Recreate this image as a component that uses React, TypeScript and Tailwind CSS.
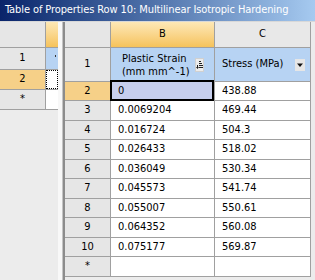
import React from 'react';

const font = { fontFamily: '"DejaVu Sans Condensed", "DejaVu Sans", sans-serif' };

const rows: { n: string; b: string; c: string; h: string }[] = [
  { n: '2', b: '0', c: '438.88', h: 'h-[19px]' },
  { n: '3', b: '0.0069204', c: '469.44', h: 'h-[20px]' },
  { n: '4', b: '0.016724', c: '504.3', h: 'h-[19px]' },
  { n: '5', b: '0.026433', c: '518.02', h: 'h-[20px]' },
  { n: '6', b: '0.036049', c: '530.34', h: 'h-[19px]' },
  { n: '7', b: '0.045573', c: '541.74', h: 'h-[20px]' },
  { n: '8', b: '0.055007', c: '550.61', h: 'h-[19px]' },
  { n: '9', b: '0.064352', c: '560.08', h: 'h-[20px]' },
  { n: '10', b: '0.075177', c: '569.87', h: 'h-[19px]' },
  { n: '*', b: '', c: '', h: 'h-[20px]' },
];

const SortIcon = () => (
  <svg width="9" height="14" viewBox="0 0 9 14" className="block">
    <rect x="0.5" y="0.5" width="8" height="13" fill="#ececec" stroke="#d0d0d0" />
    <path d="M4 3.5h2M4 5.5h3M4 7.5h4M4 9.5h4" stroke="#222" strokeWidth="1" />
    <path d="M1 9h3l-1.5 2z" fill="#222" />
    <rect x="2" y="7" width="1" height="2" fill="#222" />
  </svg>
);

const DropIcon = () => (
  <svg width="10" height="12" viewBox="0 0 10 12" className="block">
    <rect x="0" y="0" width="10" height="12" fill="#e6e6e6" />
    <path d="M2 4.5h6l-3 3.5z" fill="#111" />
  </svg>
);

export default function App() {
  return (
    <div className="w-[315px] h-[280px] bg-[#ececec] overflow-hidden flex flex-col text-black" style={font}>
      <div className="h-[21px] shrink-0 bg-gradient-to-r from-[#0a246a] to-[#a6caf0] text-white text-[11px] tracking-[-0.1px] pl-[5px] flex items-center">
        Table of Properties Row 10: Multilinear Isotropic Hardening
      </div>
      <div className="h-px shrink-0 bg-[#d8d8d8]" />
      <div className="flex flex-1 text-[11px]">
        {/* left pane */}
        <div className="w-[58px] flex flex-col">
          <div className="flex h-[26px] border-b border-[#a0a0a0]">
            <div className="w-[46px] bg-[#e6e6e6] border-r border-[#a0a0a0]" />
            <div className="w-[12px] bg-gradient-to-b from-[#fde8b6] to-[#f6c35a]" />
          </div>
          <div className="flex h-[22px] border-b border-[#a0a0a0]">
            <div className="w-[46px] bg-[#e6e6e6] border-r border-[#a0a0a0] flex items-center justify-center">1</div>
            <div className="w-[12px] bg-[#b7d3f3] relative">
              <div className="absolute left-[9px] top-[7px] w-px h-[2px] bg-[#333]" />
            </div>
          </div>
          <div className="flex h-[20px] border-b border-[#a0a0a0]">
            <div className="w-[46px] bg-[#f6d088] border-r border-[#a0a0a0] flex items-center justify-center">2</div>
            <div className="w-[12px] bg-white border border-dotted border-black" />
          </div>
          <div className="flex h-[20px] border-b border-[#a0a0a0]">
            <div className="w-[46px] bg-[#e6e6e6] border-r border-[#a0a0a0] flex items-center justify-center">*</div>
            <div className="w-[12px] bg-white" />
          </div>
        </div>
        <div className="w-[4px] bg-[#f8f8f8]" />
        <div className="w-[1px] bg-[#c4c4c4]" />
        <div className="w-[2px] bg-[#8c8c8c]" />
        {/* right table */}
        <div className="w-[246px] flex flex-col">
          <div className="flex h-[26px] border-b border-[#a0a0a0]">
            <div className="w-[46px] bg-[#e6e6e6] border-r border-[#a0a0a0]" />
            <div className="w-[104px] bg-gradient-to-b from-[#fde8b6] to-[#f6c35a] border-r border-[#a0a0a0] flex items-center justify-center">B</div>
            <div className="w-[96px] bg-[#e8e8e8] border-r border-[#a0a0a0] flex items-center justify-center">C</div>
          </div>
          <div className="flex h-[34px] border-b border-[#a0a0a0]">
            <div className="w-[46px] bg-[#e6e6e6] border-r border-[#a0a0a0] flex items-center justify-center">1</div>
            <div className="w-[104px] bg-[#b7d3f3] border-r border-[#a0a0a0] flex items-center pl-[11px] pr-[10px] justify-between">
              <div className="leading-[13px]">
                <div>Plastic Strain</div>
                <div>(mm mm^-1)</div>
              </div>
              <SortIcon />
            </div>
            <div className="w-[96px] bg-[#b7d3f3] border-r border-[#a0a0a0] flex items-center pl-[7px] pr-[5px] justify-between">
              <span>Stress (MPa)</span>
              <DropIcon />
            </div>
          </div>
          {rows.map((r, i) => (
            <div key={r.n} className={`flex ${r.h} border-b border-[#a0a0a0]`}>
              <div className={`w-[46px] ${i === 0 ? 'bg-[#f6d088]' : 'bg-[#e6e6e6]'} border-r border-[#a0a0a0] flex items-center justify-center`}>
                {r.n}
              </div>
              <div className={`w-[104px] ${i === 0 ? 'bg-[#c7cfed]' : 'bg-white'} border-r border-[#a0a0a0] flex items-center pl-[7px] relative`}>
                {r.b}
                {i === 0 && <div className="absolute -left-px -top-[2px] w-[104px] h-[21px] border-2 border-black" />}
              </div>
              <div className="w-[96px] bg-white border-r border-[#a0a0a0] flex items-center pl-[7px]">{r.c}</div>
            </div>
          ))}
        </div>
      </div>
    </div>
  );
}
